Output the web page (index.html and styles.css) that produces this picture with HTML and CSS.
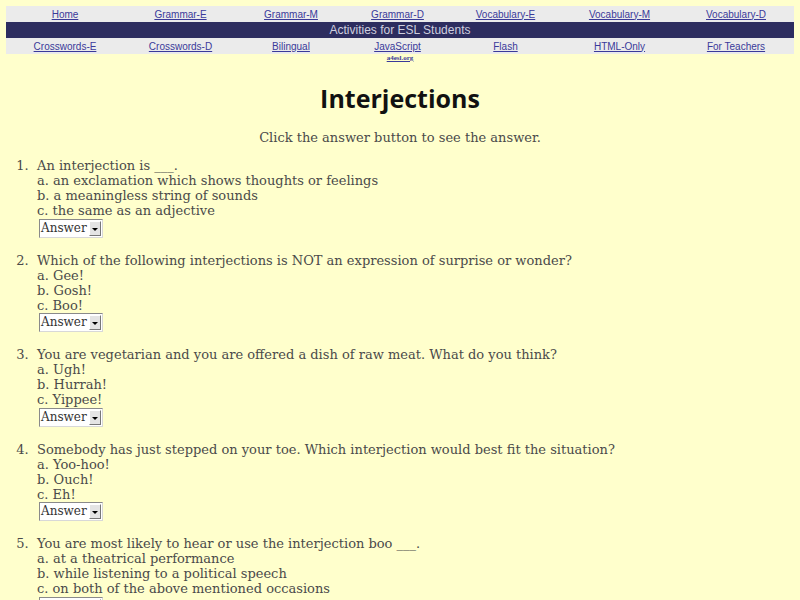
FILE: index.html
```html
<!DOCTYPE html>
<html>
<head>
<meta charset="utf-8">
<title>Interjections</title>
<link rel="stylesheet" href="styles.css">
</head>
<body>
<nav class="topnav">
  <div class="navrow">
    <a href="#">Home</a>
    <a href="#">Grammar-E</a>
    <a href="#">Grammar-M</a>
    <a href="#">Grammar-D</a>
    <a href="#">Vocabulary-E</a>
    <a href="#">Vocabulary-M</a>
    <a href="#">Vocabulary-D</a>
  </div>
  <div class="banner">Activities for ESL Students</div>
  <div class="navrow">
    <a href="#">Crosswords-E</a>
    <a href="#">Crosswords-D</a>
    <a href="#">Bilingual</a>
    <a href="#">JavaScript</a>
    <a href="#">Flash</a>
    <a href="#">HTML-Only</a>
    <a href="#">For Teachers</a>
  </div>
  <div class="site"><a href="#">a4esl.org</a></div>
</nav>

<h1 class="title">Interjections</h1>
<p class="intro">Click the answer button to see the answer.</p>

<ol class="quiz">
  <li>An interjection is ___.<br>
    a. an exclamation which shows thoughts or feelings<br>
    b. a meaningless string of sounds<br>
    c. the same as an adjective<br>
    <span class="sel"><span class="sel-text">Answer</span><span class="sel-btn"></span></span>
  </li>
  <li>Which of the following interjections is NOT an expression of surprise or wonder?<br>
    a. Gee!<br>
    b. Gosh!<br>
    c. Boo!<br>
    <span class="sel"><span class="sel-text">Answer</span><span class="sel-btn"></span></span>
  </li>
  <li>You are vegetarian and you are offered a dish of raw meat. What do you think?<br>
    a. Ugh!<br>
    b. Hurrah!<br>
    c. Yippee!<br>
    <span class="sel"><span class="sel-text">Answer</span><span class="sel-btn"></span></span>
  </li>
  <li>Somebody has just stepped on your toe. Which interjection would best fit the situation?<br>
    a. Yoo-hoo!<br>
    b. Ouch!<br>
    c. Eh!<br>
    <span class="sel"><span class="sel-text">Answer</span><span class="sel-btn"></span></span>
  </li>
  <li>You are most likely to hear or use the interjection boo ___.<br>
    a. at a theatrical performance<br>
    b. while listening to a political speech<br>
    c. on both of the above mentioned occasions<br>
    <span class="sel"><span class="sel-text">Answer</span><span class="sel-btn"></span></span>
  </li>
</ol>
</body>
</html>
```

FILE: styles.css
```css
html, body {
  margin: 0;
  padding: 0;
}
body {
  background: #ffffcc;
  font-family: "DejaVu Serif", serif;
  font-size: 13px;
  color: #4a4a4a;
  padding: 6px 6px 0 6px;
}
.topnav {
  font-family: "Liberation Sans", Arial, sans-serif;
}
.navrow {
  display: grid;
  grid-template-columns: 118fr 113fr 108fr 105fr 111fr 117fr 116fr;
  background: #ebebeb;
  height: 16px;
  align-items: center;
  font-size: 10px;
  text-align: center;
}
.navrow a {
  color: #3a3a9a;
  text-decoration: underline;
}
.banner {
  background: #2d2d5f;
  color: #cfcfdf;
  height: 16px;
  line-height: 16px;
  text-align: center;
  font-size: 12px;
}
.site {
  text-align: center;
  font-size: 7px;
  line-height: 9px;
  font-weight: bold;
  font-family: "Liberation Serif", serif;
}
.site a {
  color: #3a3a9a;
}
.title {
  font-family: "Open Sans", "DejaVu Sans", sans-serif;
  font-weight: bold;
  font-size: 25px;
  color: #111111;
  text-align: center;
  margin: 20px 0 0 0;
  line-height: 30px;
}
.intro {
  text-align: center;
  margin: 17px 0 0 0;
  line-height: 15px;
}
.quiz {
  margin: 13px 0 0 0;
  padding-left: 31px;
  line-height: 15px;
}
.quiz li {
  padding-bottom: 15px;
}
.quiz li::marker {
  content: counter(list-item) ".  ";
  white-space: pre;
}
.sel {
  display: inline-flex;
  align-items: stretch;
  margin: 0.5px 0 0 2px;
  height: 19px;
  background: #ffffff;
  border: 1px solid #8a8a8a;
  border-right-color: #d8d8d8;
  border-bottom-color: #d8d8d8;
  vertical-align: top;
  box-sizing: border-box;
}
.sel-text {
  font-size: 12px;
  line-height: 17px;
  color: #333333;
  padding: 0 2px 0 1px;
}
.sel-btn {
  width: 12px;
  margin: 1px 1px 1px 0;
  background: #e4e4e4;
  border-left: 1px solid #ffffff;
  border-top: 1px solid #ffffff;
  border-right: 1px solid #777777;
  border-bottom: 1px solid #777777;
  position: relative;
  box-sizing: border-box;
}
.sel-btn::after {
  content: "";
  position: absolute;
  left: 2px;
  top: 6px;
  border-left: 3px solid transparent;
  border-right: 3px solid transparent;
  border-top: 3px solid #000000;
}
```
